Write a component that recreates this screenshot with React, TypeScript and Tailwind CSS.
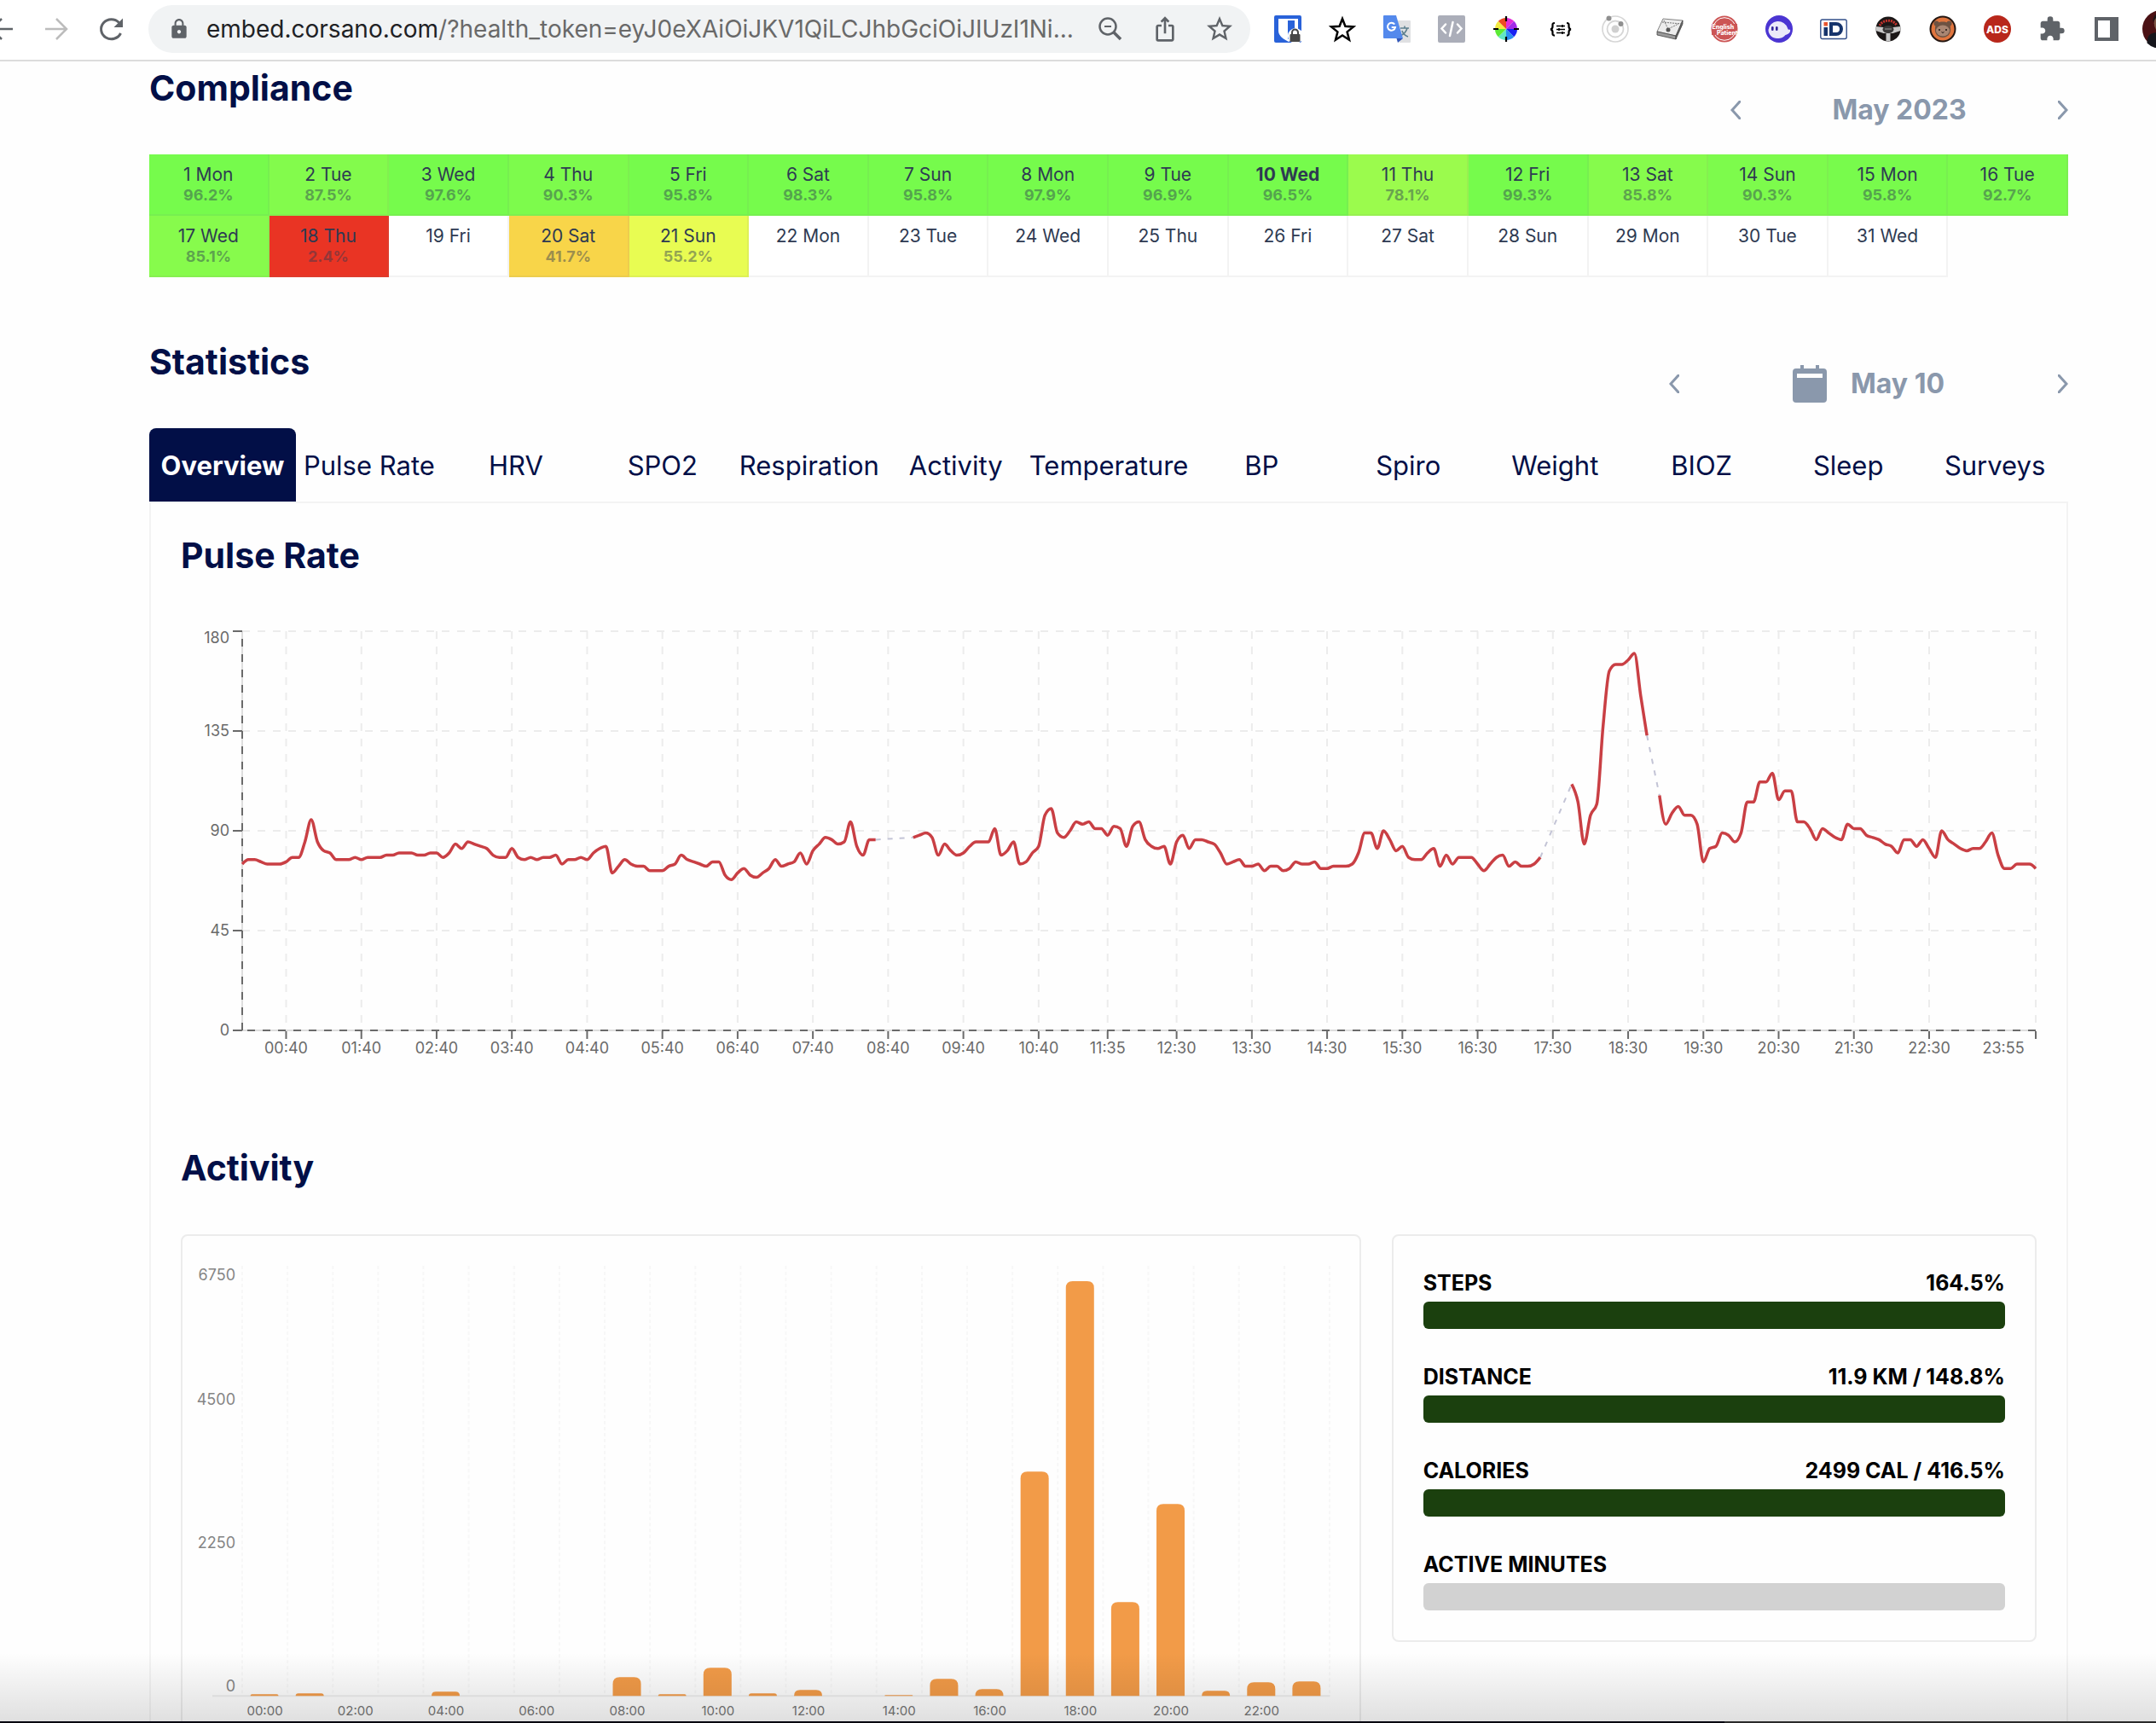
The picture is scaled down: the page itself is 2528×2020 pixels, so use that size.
import { ReactNode } from "react";
import { MdExtension, MdIosShare, MdLock, MdStarBorder } from "react-icons/md";

type TDay = {
  label: string;
  percent?: string;
  color?: string;
  active?: boolean;
};

const DAYS: TDay[] = [
  { label: "1 Mon", percent: "96.2%", color: "bg-[#76fb4c]" },
  { label: "2 Tue", percent: "87.5%", color: "bg-[#83fb4c]" },
  { label: "3 Wed", percent: "97.6%", color: "bg-[#76fb4c]" },
  { label: "4 Thu", percent: "90.3%", color: "bg-[#7dfb4c]" },
  { label: "5 Fri", percent: "95.8%", color: "bg-[#76fb4c]" },
  { label: "6 Sat", percent: "98.3%", color: "bg-[#76fb4c]" },
  { label: "7 Sun", percent: "95.8%", color: "bg-[#76fb4c]" },
  { label: "8 Mon", percent: "97.9%", color: "bg-[#76fb4c]" },
  { label: "9 Tue", percent: "96.9%", color: "bg-[#76fb4c]" },
  { label: "10 Wed", percent: "96.5%", color: "bg-[#76fb4c]", active: true },
  { label: "11 Thu", percent: "78.1%", color: "bg-[#9bfb4d]" },
  { label: "12 Fri", percent: "99.3%", color: "bg-[#76fb4c]" },
  { label: "13 Sat", percent: "85.8%", color: "bg-[#86fb4c]" },
  { label: "14 Sun", percent: "90.3%", color: "bg-[#7dfb4c]" },
  { label: "15 Mon", percent: "95.8%", color: "bg-[#78fb4c]" },
  { label: "16 Tue", percent: "92.7%", color: "bg-[#7bfb4c]" },
  { label: "17 Wed", percent: "85.1%", color: "bg-[#87fb4c]" },
  { label: "18 Thu", percent: "2.4%", color: "bg-[#e93424]" },
  { label: "19 Fri" },
  { label: "20 Sat", percent: "41.7%", color: "bg-[#f8d549]" },
  { label: "21 Sun", percent: "55.2%", color: "bg-[#e8fc52]" },
  { label: "22 Mon" },
  { label: "23 Tue" },
  { label: "24 Wed" },
  { label: "25 Thu" },
  { label: "26 Fri" },
  { label: "27 Sat" },
  { label: "28 Sun" },
  { label: "29 Mon" },
  { label: "30 Tue" },
  { label: "31 Wed" },
];

const TABS = [
  "Overview",
  "Pulse Rate",
  "HRV",
  "SPO2",
  "Respiration",
  "Activity",
  "Temperature",
  "BP",
  "Spiro",
  "Weight",
  "BIOZ",
  "Sleep",
  "Surveys",
];

// One value per 5 minutes, each run starts at the given sample index
const PULSE_RUNS: { start: number; values: number[] }[] = [
  {
    start: 0,
    values: [
      75, 77, 77, 76, 75, 75, 75, 76, 78, 78, 85, 95, 85, 81, 80, 77, 77, 77,
      78, 77, 78, 78, 78, 79, 79, 80, 80, 80, 79, 79, 80, 80, 78, 80, 84, 82,
      85, 84, 83, 82, 79, 78, 78, 82, 78, 77, 78, 77, 78, 78, 79, 75, 77, 77,
      78, 77, 80, 82, 83, 71, 74, 77, 75, 74, 74, 72, 72, 72, 74, 75, 79, 77,
      76, 75, 74, 76, 76, 70, 68, 71, 73, 70, 69, 71, 73, 77, 74, 75, 76, 80,
      75, 81, 84, 87, 86, 84, 85, 94, 83, 79, 86, 86,
    ],
  },
  {
    start: 107,
    values: [
      87, 88, 89, 87, 79, 84, 81, 79, 80, 83, 85, 85, 85, 91, 79, 81, 85, 75,
      76, 80, 83, 97, 100, 89, 87, 90, 94, 93, 94, 91, 91, 88, 92, 91, 83, 92,
      94, 86, 83, 82, 83, 75, 85, 88, 82, 86, 86, 85, 84, 80, 75, 76, 77, 74,
      74, 75, 72, 74, 74, 72, 73, 76, 75, 75, 76, 73, 73, 74, 74, 74, 75, 80,
      89, 89, 82, 90, 86, 81, 83, 78, 77, 77, 80, 82, 74, 79, 75, 78, 78, 78,
      75, 72, 75, 78, 79, 74, 76, 74, 74, 75, 78,
    ],
  },
  {
    start: 212,
    values: [111, 103, 84, 97, 102, 137, 162, 165, 165, 167, 170, 151, 133],
  },
  {
    start: 226,
    values: [
      106, 93, 98, 101, 97, 97, 93, 76, 82, 83, 89, 88, 85, 89, 103, 103, 112,
      112, 116, 104, 108, 108, 94, 94, 91, 86, 91, 89, 87, 86, 93, 91, 91, 88,
      87, 86, 84, 83, 80, 86, 86, 83, 86, 82, 78, 90, 86, 84, 82, 81, 82, 82,
      85, 89, 79, 73, 73, 75, 75, 75, 73,
    ],
  },
];

const PULSE_TICKS = [
  { index: 7, label: "00:40" },
  { index: 19, label: "01:40" },
  { index: 31, label: "02:40" },
  { index: 43, label: "03:40" },
  { index: 55, label: "04:40" },
  { index: 67, label: "05:40" },
  { index: 79, label: "06:40" },
  { index: 91, label: "07:40" },
  { index: 103, label: "08:40" },
  { index: 115, label: "09:40" },
  { index: 127, label: "10:40" },
  { index: 138, label: "11:35" },
  { index: 149, label: "12:30" },
  { index: 161, label: "13:30" },
  { index: 173, label: "14:30" },
  { index: 185, label: "15:30" },
  { index: 197, label: "16:30" },
  { index: 209, label: "17:30" },
  { index: 221, label: "18:30" },
  { index: 233, label: "19:30" },
  { index: 245, label: "20:30" },
  { index: 257, label: "21:30" },
  { index: 269, label: "22:30" },
  { index: 286, label: "23:55" },
];

const ACTIVITY_BARS = [
  2, 3, 0, 0, 5, 0, 0, 0, 22, 2, 33, 3, 7, 0, 1, 20, 8, 263, 486, 110, 225, 6,
  16, 17,
];

const GOALS = [
  { name: "STEPS", value: "164.5%", done: 100 },
  { name: "DISTANCE", value: "11.9 KM / 148.8%", done: 100 },
  { name: "CALORIES", value: "2499 CAL / 416.5%", done: 100 },
  { name: "ACTIVE MINUTES", value: "", done: 0 },
];

const px = (index: number) => 72 + (index * 2103) / 286;
const py = (value: number) => 484 - value * 2.6;

// Monotone cubic through the samples, so peaks never overshoot
const monotonePath = (start: number, values: number[]) => {
  const x = values.map((_, i) => px(start + i));
  const y = values.map(py);
  const n = values.length;
  const h = x[1] - x[0];
  const s = y.slice(1).map((v, i) => (v - y[i]) / h);
  const m = y.map((_, i) => {
    if (i === 0 || i === n - 1) return 0;
    const a = s[i - 1];
    const b = s[i];
    if (a * b <= 0) return 0;
    const sign = a < 0 ? -2 : 2;
    return sign * Math.min(Math.abs(a), Math.abs(b), Math.abs(a + b) / 4);
  });
  m[0] = (3 * s[0] - m[1]) / 2;
  m[n - 1] = (3 * s[n - 2] - m[n - 2]) / 2;
  let d = `M${x[0]},${y[0]}`;
  for (let i = 1; i < n; i++) {
    d += `C${x[i - 1] + h / 3},${y[i - 1] + (m[i - 1] * h) / 3},${
      x[i] - h / 3
    },${y[i] - (m[i] * h) / 3},${x[i]},${y[i]}`;
  }
  return d;
};

const Svg = ({
  children,
  className = "size-8",
}: {
  children: ReactNode;
  className?: string;
}) => (
  <svg viewBox="0 0 32 32" className={className} fill="none" aria-hidden>
    {children}
  </svg>
);

const EXTENSIONS: { name: string; icon: ReactNode }[] = [
  {
    name: "Passwords",
    icon: (
      <Svg>
        <rect width="32" height="32" rx="2" fill="#2962d9" />
        <path d="M5 4h23v14c0 6-6 10-11 13C11 28 5 24 5 18z" fill="#fff" />
        <path d="M16 6h8v12c0 5-4 8-8 10z" fill="#2962d9" />
        <circle cx="25" cy="24" r="9" fill="#fff" />
        <rect x="18.500" y="22" width="12" height="9" rx="1" fill="#484848" />
        <path d="M21 22v-2a3.500 3.500 0 0 1 7 0v2" stroke="#484848" strokeWidth="2" />
      </Svg>
    ),
  },
  {
    name: "Favourites",
    icon: (
      <Svg>
        <path
          d="M16 4l3.400 8.700 9.600.7-7.400 6 2.400 9.300-8-5.200-8 5.200 2.400-9.300-7.400-6 9.600-.7z"
          stroke="#000"
          strokeWidth="2.500"
        />
      </Svg>
    ),
  },
  {
    name: "Translate",
    icon: (
      <Svg>
        <path d="M12 6h19a1 1 0 0 1 1 1v24a1 1 0 0 1-1 1H19z" fill="#dfe0e2" />
        <path
          d="M20 15h10M25 12.500V15M28 15c-1 4-4 7-8 9M22 18c1 3 4 6 7 7"
          stroke="#5d7f8e"
          strokeWidth="1.600"
        />
        <path d="M1 0h14l8 27H1a1 1 0 0 1-1-1V1a1 1 0 0 1 1-1z" fill="#5489ec" />
        <path d="M15.500 27H23l-6 5z" fill="#3256b8" />
        <path
          d="M13.200 10.500A4.500 4.500 0 1 0 14 14H9.700"
          stroke="#fff"
          strokeWidth="2"
        />
      </Svg>
    ),
  },
  {
    name: "Source",
    icon: (
      <Svg>
        <rect width="32" height="32" rx="2" fill="#abaeb9" />
        <path
          d="M9 10.500L4.500 15.500 9 20.500M23 10.500l4.500 5-4.500 5M17.500 8l-3.500 16"
          stroke="#fff"
          strokeWidth="2.500"
          strokeLinecap="round"
        />
      </Svg>
    ),
  },
  {
    name: "Colors",
    icon: (
      <Svg>
        <path d="M16 16V3a13 13 0 0 1 9.200 3.800z" fill="#e32bd8" />
        <path d="M16 16l9.200-9.200A13 13 0 0 1 29 16z" fill="#a12be8" />
        <path d="M16 16h13a13 13 0 0 1-3.800 9.200z" fill="#1a22f2" />
        <path d="M16 16l9.200 9.200A13 13 0 0 1 16 29z" fill="#2b8df0" />
        <path d="M16 16v13a13 13 0 0 1-9.200-3.800z" fill="#62e6c6" />
        <path d="M16 16l-9.200 9.200A13 13 0 0 1 3 16z" fill="#5bea35" />
        <path d="M16 16H3a13 13 0 0 1 3.800-9.200z" fill="#f3ea42" />
        <path d="M16 16L6.800 6.800A13 13 0 0 1 16 3z" fill="#ee4a22" />
        <path
          d="M16 1v6M16 25v6M1 16h6M25 16h6"
          stroke="#000"
          strokeWidth="2.200"
        />
      </Svg>
    ),
  },
  {
    name: "Variables",
    icon: (
      <Svg>
        <path
          d="M9 9c-3 0-2.500 1.500-2.500 4 0 2-.5 3-2.500 3.300 2 .3 2.500 1.300 2.500 3.300 0 2.500-.5 4 2.500 4M23 9c3 0 2.500 1.500 2.500 4 0 2 .5 3 2.500 3.300-2 .3-2.500 1.300-2.500 3.300 0 2.500.5 4-2.500 4"
          stroke="#000"
          strokeWidth="2.200"
        />
        <path d="M11 12.500h10M11 16.500h10M11 20.500h10" stroke="#000" strokeWidth="1.600" />
        <path d="M18 11v3M14 15v3M18 19v3" stroke="#000" strokeWidth="1.600" />
      </Svg>
    ),
  },
  {
    name: "Orbit",
    icon: (
      <Svg>
        <circle cx="16" cy="16" r="15" stroke="#d6d6d6" strokeWidth="1.600" />
        <circle cx="16" cy="16" r="9.500" stroke="#d6d6d6" strokeWidth="1.800" />
        <circle cx="16" cy="16" r="4.500" fill="#d0d0d0" />
        <circle cx="8.500" cy="3.500" r="3" fill="#8f8f8f" />
        <circle cx="22.500" cy="10" r="3" fill="#8f8f8f" />
      </Svg>
    ),
  },
  {
    name: "Notes",
    icon: (
      <Svg>
        <path d="M8 4l23 2-8 18L1 19z" fill="#ececec" stroke="#666" strokeWidth=".8" />
        <path d="M1 19v4l22 5V24z" fill="#9a9a9a" stroke="#444" strokeWidth=".8" />
        <path d="M23 24l8-18v4l-8 18z" fill="#666" stroke="#444" strokeWidth=".8" />
        <path d="M7 8l23 2M9 6l5 10 12-6" stroke="#777" strokeDasharray="2 1" />
        <circle cx="14" cy="17" r="2.500" fill="#555" />
      </Svg>
    ),
  },
  {
    name: "English Patient",
    icon: (
      <Svg>
        <circle cx="16" cy="16" r="15.500" fill="#cc5555" />
        <circle cx="16" cy="16" r="13.300" stroke="#fff" />
        <rect x="1" y="10" width="30" height="13" fill="#cc5555" />
        <text x="1.500" y="15.500" fontSize="7" fontWeight="800" fill="#fff">
          English
        </text>
        <text x="7" y="23" fontSize="7" fontWeight="800" fill="#fff">
          Patient
        </text>
      </Svg>
    ),
  },
  {
    name: "Ghost",
    icon: (
      <Svg>
        <circle cx="16" cy="16" r="16" fill="#4b35d2" />
        <path
          d="M3.500 17a11.500 11 0 0 1 22.500-2c.5 2 2 2 3 1.500 1 4-3 6-5.500 6.500-3 4-7 4-10 4-5 0-10-4-10-10z"
          fill="#ebe9f9"
        />
        <rect x="7" y="13" width="2.600" height="5" rx="1.300" fill="#34259c" />
        <rect x="12" y="13" width="2.600" height="5" rx="1.300" fill="#34259c" />
      </Svg>
    ),
  },
  {
    name: "iD",
    icon: (
      <Svg>
        <rect x=".8" y="5" width="30.400" height="22.500" rx="2" fill="#fff" stroke="#34508a" strokeWidth="1.400" />
        <rect x="4.500" y="8" width="4.500" height="4.500" fill="#e8552f" />
        <rect x="4.500" y="14" width="4.500" height="10" fill="#16346c" />
        <path
          d="M13 10h6a6 6 0 0 1 0 12h-6z"
          stroke="#16346c"
          strokeWidth="4"
        />
      </Svg>
    ),
  },
  {
    name: "Driver",
    icon: (
      <Svg>
        <circle cx="16" cy="16" r="14.500" fill="#1b1717" />
        <path d="M6 12a11 10 0 0 1 20 0" stroke="#c4322c" strokeWidth="3" strokeDasharray="2 1" />
        <path d="M1.500 13l9 1h11l9-1v5l-9 3h-3v9h-5v-9h-3l-9-3z" fill="#c9c9c9" />
        <ellipse cx="16" cy="16.500" rx="6.500" ry="4.500" fill="#3a3838" />
        <path d="M12 16h8" stroke="#999" />
      </Svg>
    ),
  },
  {
    name: "Bear",
    icon: (
      <Svg>
        <circle cx="16" cy="16" r="15.500" fill="#241712" />
        <circle cx="16" cy="16" r="13.500" fill="#e0753e" />
        <circle cx="8.500" cy="9.500" r="3" fill="#6d5242" />
        <circle cx="23.500" cy="9.500" r="3" fill="#6d5242" />
        <path d="M7 15c0-5 3-7.500 9-7.500s9 2.500 9 7.500c1 7-4 11-9 11s-10-4-9-11z" fill="#6d5242" />
        <ellipse cx="16" cy="18" rx="8" ry="6.500" fill="#a98672" />
        <circle cx="12" cy="17" r="1" fill="#1c1210" />
        <circle cx="20" cy="17" r="1" fill="#1c1210" />
        <path d="M14.500 19.500q1.500 2 3 0" stroke="#1c1210" />
      </Svg>
    ),
  },
  {
    name: "ADS",
    icon: (
      <Svg>
        <circle cx="16" cy="16" r="16" fill="#b8271b" />
        <text x="16" y="20.500" fontSize="12" fontWeight="800" fill="#fff" textAnchor="middle">
          ADS
        </text>
      </Svg>
    ),
  },
  {
    name: "Extensions",
    icon: <MdExtension className="size-8 text-[#5f6368]" />,
  },
  {
    name: "Side panel",
    icon: (
      <Svg>
        <path d="M2 2h28v28H2zM6 6v20h14V6z" fill="#5f6368" fillRule="evenodd" />
      </Svg>
    ),
  },
];

const Toolbar = () => {
  return (
    <header className="flex h-[72px] shrink-0 items-center border-b-2 border-[#dcdcdc] bg-white pb-[2px]">
      <nav className="-ml-[14px] flex gap-8">
        <button aria-label="Back">
          <Svg>
            <path d="M29 16H4M16 4L4 16l12 12" stroke="#5f6368" strokeWidth="2.500" />
          </Svg>
        </button>
        <button aria-label="Forward">
          <Svg>
            <path d="M3 16h25M16 4l12 12-12 12" stroke="#bcbcbc" strokeWidth="2.500" />
          </Svg>
        </button>
        <button aria-label="Reload">
          <Svg>
            <path
              d="M27.500 21A12 11.500 0 1 1 25.500 8.500"
              stroke="#5f6368"
              strokeWidth="3"
            />
            <path d="M30 3.500V14H19.500z" fill="#5f6368" />
          </Svg>
        </button>
      </nav>
      <div className="ml-7 flex h-14 min-w-0 flex-1 items-center rounded-full bg-[#f1f3f4] px-5">
        <MdLock className="mr-4 size-8 shrink-0 p-[3px] text-[#5f6368]" />
        <p className="min-w-0 flex-1 truncate text-[28px] leading-8 text-[#696969]">
          <span className="text-[#202124]">embed.corsano.com</span>
          /?health_token=eyJ0eXAiOiJKV1QiLCJhbGciOiJIUzI1Ni...
        </p>
        <div className="flex shrink-0 gap-8 text-[#5f6368]">
          <button aria-label="Zoom out">
            <Svg>
              <circle cx="13" cy="13" r="9.500" stroke="#5f6368" strokeWidth="2.500" />
              <path d="M9 13h8" stroke="#5f6368" strokeWidth="2" />
              <path d="M20 20l8 8" stroke="#5f6368" strokeWidth="3.500" />
            </Svg>
          </button>
          <button aria-label="Share">
            <MdIosShare className="size-8" />
          </button>
          <button aria-label="Bookmark">
            <MdStarBorder className="size-9 -mx-0.5" />
          </button>
        </div>
      </div>
      <div className="ml-7 flex shrink-0 items-center gap-8">
        {EXTENSIONS.map(({ name, icon }) => (
          <button key={name} aria-label={name}>
            {icon}
          </button>
        ))}
        <button aria-label="Profile" className="-mr-7 -ml-1.5">
          <Svg className="size-11">
            <circle cx="16" cy="16" r="16" fill="#4b1114" />
            <path d="M4 28c0-8 4-9 12-9s12 6 8 11a16 16 0 0 1-20-2z" fill="#16161c" />
            <ellipse cx="16" cy="11" rx="6" ry="8" fill="#7d5646" />
            <path d="M9 10c0-5 3-8 7-8s7 3 7 8l-3-4h-8z" fill="#1d1718" />
          </Svg>
        </button>
      </div>
    </header>
  );
};

const Chevron = ({ direction }: { direction: "Previous" | "Next" }) => (
  <button aria-label={direction} className="flex h-10 items-center">
    <svg viewBox="0 0 12 22" className="h-[22px] w-3" fill="none">
      <path
        d={direction === "Previous" ? "M11 1L2 11l9 10" : "M1 1l9 10-9 10"}
        stroke="#8a98ac"
        strokeWidth="3"
        strokeLinecap="round"
      />
    </svg>
  </button>
);

const Heading = ({ children }: { children: ReactNode }) => (
  <h2 className="text-[41px] leading-12 font-bold text-[#020f47]">
    {children}
  </h2>
);

const Compliance = () => {
  return (
    <section>
      <div className="flex h-[109px] items-start justify-between pt-[7px]">
        <Heading>Compliance</Heading>
        <div className="mt-[30px] flex w-[396px] items-center justify-between text-[32px] leading-10 font-bold text-[#8a98ac]">
          <Chevron direction="Previous" />
          <span>May 2023</span>
          <Chevron direction="Next" />
        </div>
      </div>
      <div className="grid grid-cols-[repeat(16,minmax(0,1fr))]">
        {DAYS.map(({ label, percent, color, active }) => (
          <button
            key={label}
            className={`flex h-[72px] flex-col items-center border-r-2 border-b-2 border-[#80808018] pt-3 text-[#2e3a52] ${
              color ?? "bg-white"
            }`}
          >
            <span
              className={`text-[21px] leading-6 ${active ? "font-bold" : ""}`}
            >
              {label}
            </span>
            {percent && (
              <span className="text-[18px] leading-6 font-bold opacity-45">
                {percent}
              </span>
            )}
          </button>
        ))}
      </div>
    </section>
  );
};

const PulseChart = () => {
  return (
    <svg
      viewBox="0 0 2176 520"
      className="mt-[49px] w-full"
      fontSize="18"
      fill="none"
      role="img"
      aria-label="Pulse rate over the day"
    >
      <g stroke="#ececec" strokeWidth="2" strokeDasharray="9 9">
        {[180, 135, 90, 45].map((v) => (
          <path key={v} d={`M72,${py(v)}H2175`} />
        ))}
        {PULSE_TICKS.map(({ index }) => (
          <path key={index} d={`M${px(index)},16V484`} />
        ))}
      </g>
      <path d="M72,16V484H2175" stroke="#dedede" strokeWidth="2" />
      <path
        d="M72,484V16M2175,484H72"
        stroke="#6a6a6a"
        strokeWidth="2"
        strokeDasharray="9 9"
      />
      <g stroke="#6a6a6a" strokeWidth="2">
        {[180, 135, 90, 45, 0].map((v) => (
          <path key={v} d={`M61,${py(v)}H72`} />
        ))}
        {PULSE_TICKS.map(({ index }) => (
          <path key={index} d={`M${px(index)},485v9`} />
        ))}
      </g>
      <g fill="#6a6a6a">
        {[180, 135, 90, 45, 0].map((v) => (
          <text
            key={v}
            x="57"
            y={v === 180 ? 30 : py(v) + 6}
            textAnchor="end"
          >
            {v}
          </text>
        ))}
        {PULSE_TICKS.map(({ index, label }) => (
          <text
            key={index}
            x={index === 286 ? 2137 : px(index)}
            y="511"
            textAnchor="middle"
          >
            {label}
          </text>
        ))}
      </g>
      {PULSE_RUNS.slice(1).map(({ start, values }, i) => {
        const prev = PULSE_RUNS[i];
        const last = prev.values.length - 1;
        return (
          <path
            key={start}
            d={`M${px(prev.start + last)},${py(prev.values[last])}L${px(
              start
            )},${py(values[0])}`}
            stroke="#c3c4d6"
            strokeWidth="2"
            strokeDasharray="6 8"
          />
        );
      })}
      {PULSE_RUNS.map(({ start, values }) => (
        <path
          key={start}
          d={monotonePath(start, values)}
          stroke="#c93f44"
          strokeWidth="3.500"
        />
      ))}
    </svg>
  );
};

const ActivityChart = () => {
  return (
    <svg
      viewBox="0 0 1379 620"
      className="w-full"
      fill="none"
      role="img"
      aria-label="Steps per hour"
    >
      <g stroke="#f7f7f7" strokeWidth="2" strokeDasharray="4 3">
        {Array.from({ length: 25 }, (_, i) => (
          <path key={i} d={`M${70 + i * 53.1},35V539`} />
        ))}
      </g>
      <path d="M35,539H1345" stroke="#eeeeee" strokeWidth="2" />
      <g fill="#858585" fontSize="18" textAnchor="end">
        <text x="62" y="52">
          6750
        </text>
        <text x="62" y="198">
          4500
        </text>
        <text x="62" y="366">
          2250
        </text>
        <text x="62" y="534">
          0
        </text>
      </g>
      {ACTIVITY_BARS.map((height, i) => {
        const x = 79.5 + i * 53.1;
        const r = Math.min(8, height);
        return (
          height > 0 && (
            <path
              key={i}
              d={`M${x},539v${r - height}q0,${-r} ${r},${-r}h${
                33 - 2 * r
              }q${r},0 ${r},${r}V539z`}
              fill="#f29b48"
            />
          )
        );
      })}
      <g fill="#757575" fontSize="15" textAnchor="middle">
        {Array.from({ length: 12 }, (_, i) => (
          <text key={i} x={96.5 + i * 106.2} y="562">
            {`${String(i * 2).padStart(2, "0")}:00`}
          </text>
        ))}
      </g>
    </svg>
  );
};

const Goals = () => {
  return (
    <div className="flex h-[478px] flex-col gap-10 rounded-lg border-2 border-[#ececec] px-[35px] pt-[39px]">
      {GOALS.map(({ name, value, done }) => (
        <div key={name}>
          <div className="flex h-[38px] justify-between text-[25px] leading-8 font-bold text-black">
            <span>{name}</span>
            <span>{value}</span>
          </div>
          <div className="h-8 overflow-hidden rounded-md bg-[#d2d2d2]">
            <div className="h-full bg-[#1b400e]" style={{ width: `${done}%` }} />
          </div>
        </div>
      ))}
    </div>
  );
};

const Statistics = () => {
  return (
    <section className="mt-[68px]">
      <div className="flex h-[109px] items-start justify-between pt-[7px]">
        <Heading>Statistics</Heading>
        <div className="mt-7 flex w-[468px] items-center justify-between text-[32px] leading-10 font-bold text-[#8a98ac]">
          <Chevron direction="Previous" />
          <button className="flex items-center gap-7">
            <svg viewBox="0 0 40 44" className="h-11 w-10" fill="#8a98ac">
              <path
                d="M9 0h4v4h14V0h4v4h5a4 4 0 0 1 4 4v32a4 4 0 0 1-4 4H4a4 4 0 0 1-4-4V8a4 4 0 0 1 4-4h5zM5 10v5h30v-5z"
                fillRule="evenodd"
              />
            </svg>
            May 10
          </button>
          <Chevron direction="Next" />
        </div>
      </div>
      <div role="tablist" className="flex h-[86px]">
        {TABS.map((tab, i) => (
          <button
            key={tab}
            role="tab"
            aria-selected={i === 0}
            className={`flex-1 pt-0.5 text-[31px] whitespace-nowrap ${
              i === 0
                ? "rounded-t-lg bg-[#020f47] font-bold text-white"
                : "text-[#020f47]"
            }`}
          >
            {tab}
          </button>
        ))}
      </div>
      <div className="border-2 border-[#f3f3f3] px-[35px] pt-[37px]">
        <Heading>Pulse Rate</Heading>
        <PulseChart />
        <div className="mt-[101px]">
          <Heading>Activity</Heading>
        </div>
        <div className="mt-[54px] grid grid-cols-[1383fr_756fr] items-start gap-9">
          <div className="rounded-lg border-2 border-[#ececec]">
            <ActivityChart />
          </div>
          <Goals />
        </div>
      </div>
    </section>
  );
};

export default function App() {
  return (
    <div className="relative flex h-screen flex-col overflow-hidden bg-[#fefefe] font-[Inter,'Liberation_Sans',sans-serif]">
      <Toolbar />
      <main className="min-h-0 flex-1 overflow-hidden pr-[103px] pl-[175px]">
        <Compliance />
        <Statistics />
      </main>
      <div className="pointer-events-none absolute inset-x-0 bottom-0">
        <div className="h-20 bg-linear-to-b from-transparent to-black/12" />
        <div className="flex h-0.5 bg-[#03030f]">
          <div className="ml-auto w-1/5 bg-[#2a2a2a]" />
        </div>
      </div>
    </div>
  );
}
